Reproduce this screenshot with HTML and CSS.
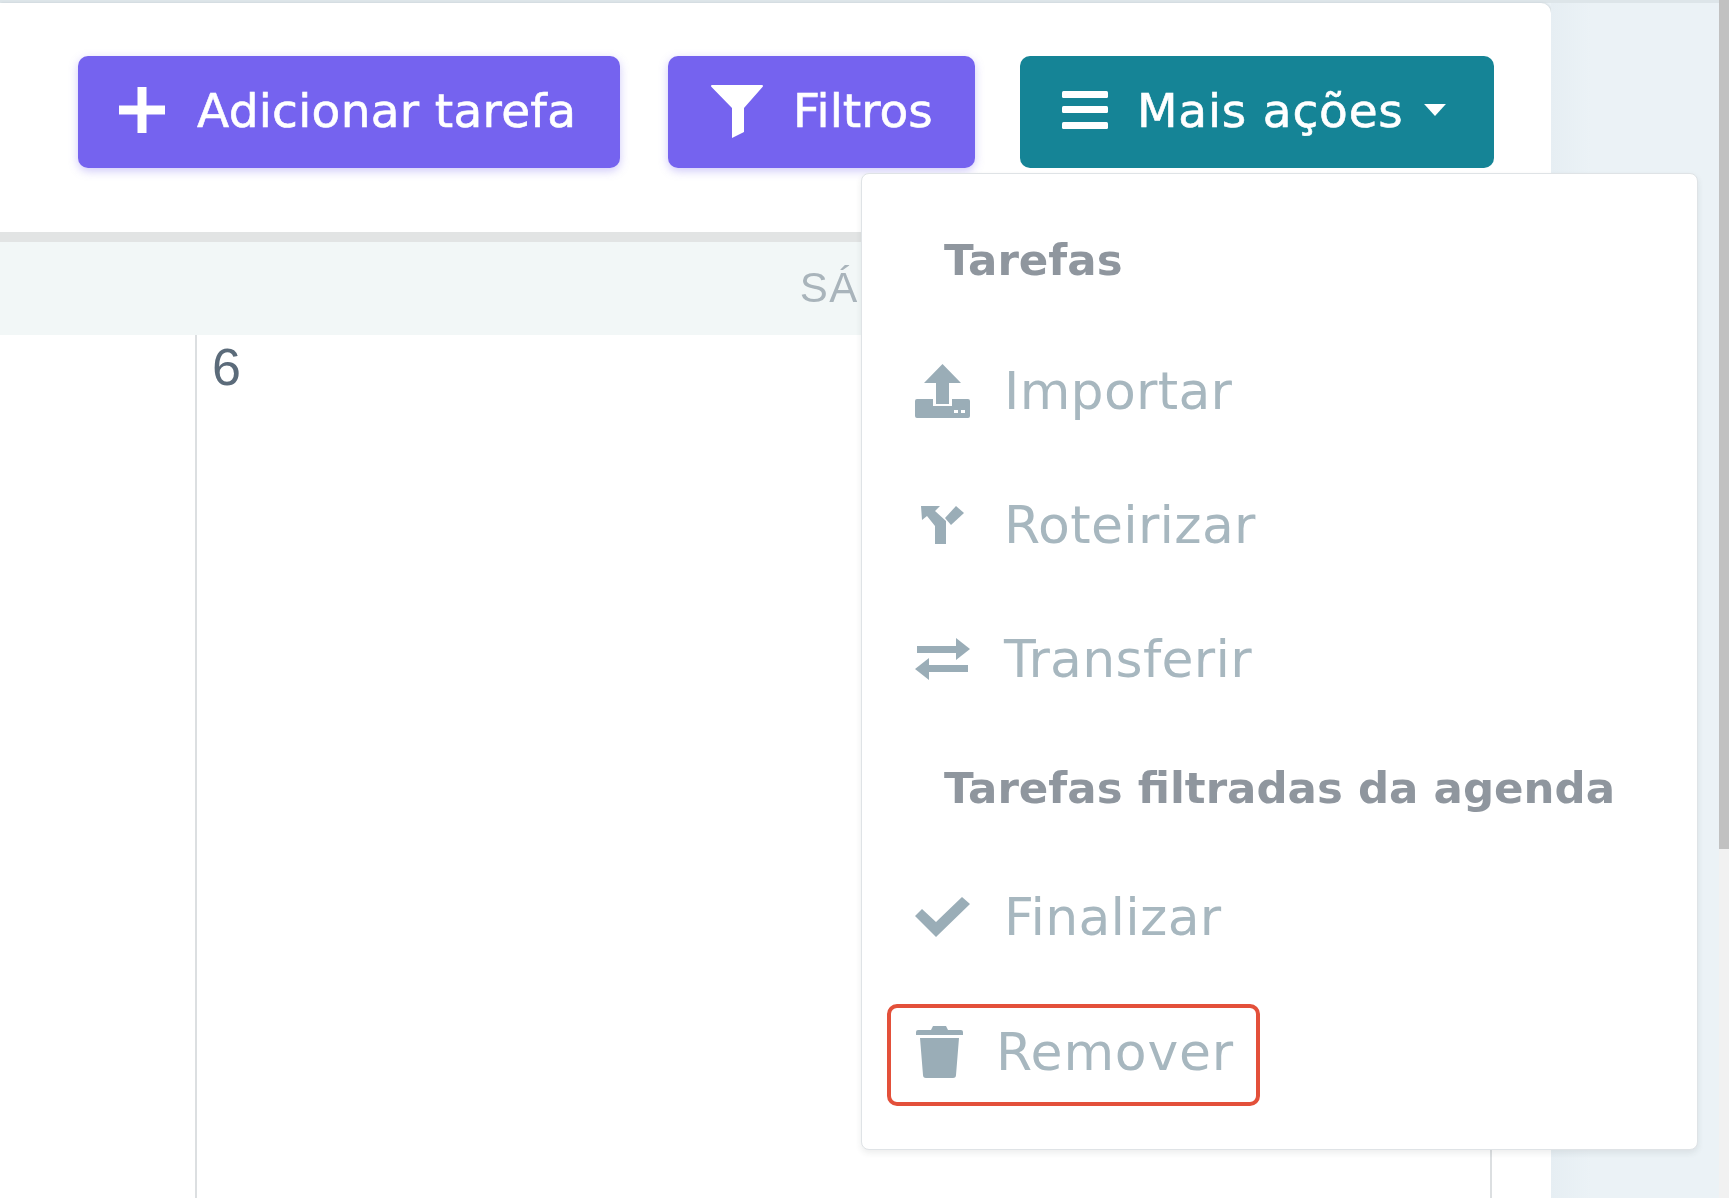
FILE: index.html
```html
<!DOCTYPE html>
<html lang="pt">
<head>
<meta charset="utf-8">
<title>Agenda</title>
<link rel="stylesheet" href="styles.css">
</head>
<body>
<div class="page">
  <main class="card">
    <div class="toolbar">
      <button class="btn btn-purple btn-add">
        <svg class="btn-icon" viewBox="0 0 46 46"><path d="M18.500 0h9v18.500H46v9H27.500V46h-9V27.500H0v-9h18.500z"/></svg>
        <span>Adicionar tarefa</span>
      </button>
      <button class="btn btn-purple btn-filter">
        <svg class="btn-icon funnel" viewBox="0 0 52 54"><path d="M1 1h50a1 1 0 0 1 .7 1.700L33 24v24l-12 6V24L.3 2.700A1 1 0 0 1 1 1z"/></svg>
        <span>Filtros</span>
      </button>
      <button class="btn btn-teal btn-more">
        <svg class="btn-icon bars" viewBox="0 0 46 38"><rect width="46" height="7" rx="1.500"/><rect y="15" width="46" height="7" rx="1.500"/><rect y="31" width="46" height="7" rx="1.500"/></svg>
        <span>Mais ações</span>
        <svg class="caret" viewBox="0 0 20 11"><path d="M0 0h20L10 11z"/></svg>
      </button>
    </div>
    <div class="week-head"><div class="head-side"></div><div class="head-day">SÁB</div></div>
    <div class="week-row"><div class="cell-side"></div><div class="cell-day">6</div></div>
  </main>
  <aside class="scroll-area"><div class="scrollbar"><div class="thumb"></div></div></aside>
  <div class="menu">
    <div class="menu-title menu-title-first">Tarefas</div>
    <div class="menu-item">
      <svg class="menu-icon" viewBox="0 0 55 54"><path d="M27.500 0 46 19H34v21H21V19H9z"/><path d="M0 37a2 2 0 0 1 2-2h16v7h19v-7h16a2 2 0 0 1 2 2v15a2 2 0 0 1-2 2H2a2 2 0 0 1-2-2z"/><path class="cut" d="M39 46h4v3h-4zM46 46h4v3h-4z"/></svg>
      <span>Importar</span>
    </div>
    <div class="menu-item">
      <svg class="menu-icon route" viewBox="0 0 55 38"><path d="M6 0h19l-5 5 11 10v23H20V20L12 10l-5 4z"/><path d="M41 0l8 7-13 12-6-7z"/></svg>
      <span>Roteirizar</span>
    </div>
    <div class="menu-item">
      <svg class="menu-icon" viewBox="0 0 55 42"><path d="M41 0 55 11 41 22v-7H2V8h39zM14 20v7h39v7H14v8L0 31z"/></svg>
      <span>Transferir</span>
    </div>
    <div class="menu-title menu-title-second">Tarefas filtradas da agenda</div>
    <div class="menu-item">
      <svg class="menu-icon" viewBox="0 0 55 40"><path d="M47 0l8 7-34 33L0 19l7-7 14 13z"/></svg>
      <span>Finalizar</span>
    </div>
    <div class="menu-row-remove">
      <div class="menu-item-remove">
        <svg class="trash" viewBox="0 0 47 52"><path d="M17 0h13l2 4h13a2 2 0 0 1 2 2v3H0V6a2 2 0 0 1 2-2h13z"/><path d="M4 12h39l-3 37a3 3 0 0 1-3 3H10a3 3 0 0 1-3-3z"/></svg>
        <span>Remover</span>
      </div>
    </div>
  </div>
</div>
</body>
</html>
```
FILE: styles.css
```css
* { box-sizing: border-box; }
html, body { margin: 0; height: 100%; }
body {
  background: #ebf2f6;
  font-family: "DejaVu Sans", "Liberation Sans", sans-serif;
  overflow: hidden;
}
.page {
  position: relative;
  display: flex;
  height: 1198px;
  border-top: 3px solid #dde5e9;
  filter: blur(.6px);
}
.card {
  width: 1551px;
  flex: none;
  background: #fff;
  border-top-right-radius: 10px;
  box-shadow: 1px 0 2px rgba(120, 130, 140, .25);
  display: flex;
  flex-direction: column;
}
.scroll-area {
  flex: 1;
  display: flex;
  justify-content: flex-end;
  background: linear-gradient(90deg, #e6eef3, #ebf2f6 40px);
}
.scrollbar { width: 10px; background: #f1f1f1; margin-top: -3px; }
.thumb { height: 849px; background: #c1c1c1; }

.toolbar {
  height: 239px;
  flex: none;
  display: flex;
  justify-content: flex-end;
  padding: 53px 57px 0 0;
  border-bottom: 10px solid #e2e4e4;
}
.btn {
  height: 112px;
  border: 0;
  border-radius: 10px;
  color: #fff;
  font: 400 47px/1 "DejaVu Sans", "Liberation Sans", sans-serif;
  -webkit-text-stroke: .6px #fff;
  display: flex;
  align-items: center;
  padding: 0 0 4px;
}
.btn svg { fill: #fff; flex: none; }
.btn-purple { background: #7563ef; box-shadow: 0 3px 10px rgba(117, 99, 239, .35); }
.btn-teal { background: #158496; }
.btn-add { width: 542px; padding-left: 41px; gap: 32px; margin-right: 48px; letter-spacing: .3px; }
.btn-filter { width: 307px; padding-left: 43px; gap: 30px; margin-right: 45px; }
.btn-more { width: 474px; padding-left: 42px; gap: 29px; letter-spacing: .8px; }
.btn-icon { width: 46px; height: 46px; }
.funnel { width: 52px; height: 54px; margin-top: 2px; }
.bars { height: 38px; }
.caret { width: 22px; height: 12px; margin-left: -9px; }

.week-head {
  height: 93px;
  flex: none;
  background: #f2f7f7;
  display: grid;
  grid-template-columns: 197px 1294px;
}
.head-day {
  text-align: center;
  color: #a9b4bb;
  font: 400 42px/92px "Liberation Sans", sans-serif;
  letter-spacing: 1.5px;
}
.week-row {
  flex: 1;
  display: grid;
  grid-template-columns: 197px 1295px;
}
.cell-side { border-right: 2px solid #dcdfe1; }
.cell-day {
  border-right: 2px solid #dcdfe1;
  padding: 6px 0 0 15px;
  font: 400 52px/52px "Liberation Sans", sans-serif;
  color: #5b6b7a;
}

.menu {
  position: absolute;
  left: 861px;
  top: 170px;
  width: 837px;
  height: 977px;
  background: #fff;
  border: 1px solid #dfe3e6;
  border-radius: 8px;
  box-shadow: 0 3px 6px rgba(40, 50, 60, .09);
  padding-top: 21px;
}
.menu-title {
  padding-left: 82px;
  display: flex;
  align-items: center;
  font-size: 43.500px;
  font-weight: 700;
  color: #8f969e;
}
.menu-title-first { height: 129px; }
.menu-title-second { height: 124px; }
.menu-item {
  height: 134px;
  padding-left: 53px;
  display: flex;
  align-items: center;
  gap: 34px;
  font-size: 52px;
  letter-spacing: .3px;
  color: #a7b7bf;
}
.menu-icon { width: 55px; height: 54px; fill: #9aadb7; flex: none; }
.route { height: 38px; }
.cut { fill: #fff; }
.menu-row-remove {
  height: 134px;
  padding: 8px 0 0 25px;
  display: flex;
  align-items: center;
}
.menu-item-remove {
  width: 373px;
  height: 102px;
  border: 4px solid #e3503a;
  border-radius: 10px;
  padding: 0 0 7px 25px;
  display: flex;
  align-items: center;
  gap: 33px;
  font-size: 52px;
  letter-spacing: .8px;
  color: #a7b7bf;
}
.trash { width: 47px; height: 52px; fill: #9aadb7; flex: none; }
```
